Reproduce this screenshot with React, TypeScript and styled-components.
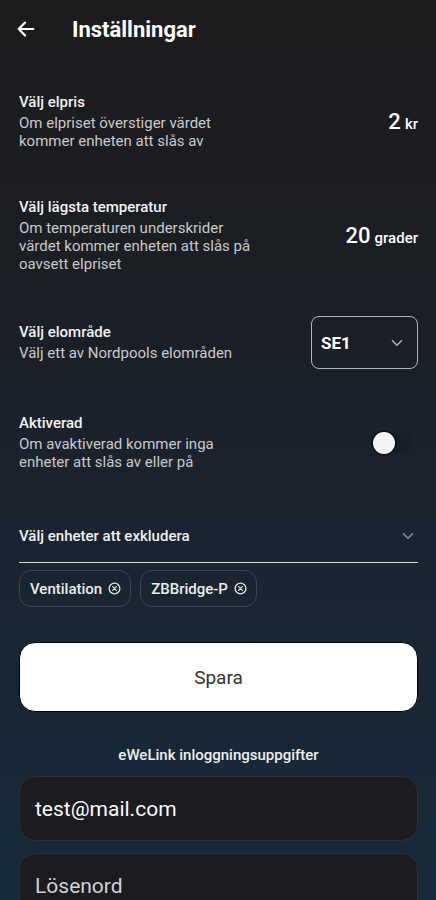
import React from "react";
import styled, { createGlobalStyle } from "styled-components";

const Global = createGlobalStyle`
  html, body { margin: 0; padding: 0; }
  body {
    font-family: Roboto, "Noto Sans", sans-serif;
    background: #171f29;
    overflow: hidden;
    -webkit-font-smoothing: antialiased;
  }
  * { box-sizing: border-box; }
`;

const Screen = styled.div`
  width: 436px;
  height: 900px;
  overflow: hidden;
  background: linear-gradient(180deg, #1b1b1d 0%, #1b1e23 30%, #1a2430 60%, #172a3a 100%);
  color: #fff;
  display: flex;
  flex-direction: column;
`;

const Header = styled.header`
  height: 58px;
  flex-shrink: 0;
  display: flex;
  align-items: center;
  padding-left: 15px;
  gap: 35px;
`;

const Title = styled.h1`
  margin: 0;
  font-size: 22px;
  font-weight: 700;
  color: #fff;
`;

const Content = styled.main`
  padding: 35px 18px 0 19px;
  display: flex;
  flex-direction: column;
  flex-shrink: 0;
`;

const SettingRow = styled.div<{ $gap: number }>`
  display: flex;
  align-items: center;
  justify-content: space-between;
  margin-bottom: ${(p) => p.$gap}px;
`;

const TextBlock = styled.div`
  display: flex;
  flex-direction: column;
  max-width: 240px;
`;

const Label = styled.div`
  font-size: 15px;
  line-height: 18px;
  font-weight: 500;
  color: #f2f2f2;
  margin-bottom: 3px;
`;

const Desc = styled.div`
  font-size: 15px;
  line-height: 18px;
  color: #c9c9cb;
`;

const Value = styled.div`
  display: flex;
  align-items: baseline;
  gap: 4px;
  color: #fff;
`;

const Num = styled.span`
  font-size: 22px;
  font-weight: 500;
`;

const Unit = styled.span`
  font-size: 15px;
  font-weight: 500;
`;

const Select = styled.div`
  width: 107px;
  height: 53px;
  border: 1.5px solid #b4b4b6;
  border-radius: 8px;
  display: flex;
  align-items: center;
  justify-content: space-between;
  padding: 0 14px 0 9px;
  font-size: 17px;
  font-weight: 700;
  color: #fff;
`;

const Switch = styled.div`
  width: 40px;
  height: 22px;
  border-radius: 11px;
  background: rgba(10, 16, 24, 0.18);
  position: relative;
  margin-right: 6px;
`;

const Thumb = styled.div`
  position: absolute;
  left: 1px;
  top: 0;
  width: 22px;
  height: 22px;
  border-radius: 50%;
  background: #f4f4f4;
  box-shadow: 0 0 2px 1px rgba(0, 0, 0, 0.6);
`;

const MultiField = styled.div`
  display: flex;
  align-items: center;
  justify-content: space-between;
  padding: 0 4px 17px 0;
  border-bottom: 1.5px solid #d8d8da;
  font-size: 15px;
  line-height: 18px;
  font-weight: 500;
  color: #f0f0f0;
`;

const Chips = styled.div`
  display: flex;
  gap: 9px;
  margin-top: 7px;
`;

const Chip = styled.div`
  height: 37px;
  display: flex;
  align-items: center;
  gap: 6px;
  padding: 0 9px 0 10px;
  border: 1px solid #3f464f;
  border-radius: 12px;
  font-size: 15px;
  font-weight: 500;
  color: #ececec;
`;

const SaveButton = styled.button`
  margin-top: 35px;
  height: 70px;
  width: 100%;
  background: #fff;
  border: 1px solid #000;
  border-radius: 16px;
  font-family: Roboto, sans-serif;
  font-size: 19px;
  color: #333;
`;

const SectionCaption = styled.div`
  margin-top: 34px;
  text-align: center;
  font-size: 15px;
  line-height: 18px;
  font-weight: 500;
  color: #f0f0f0;
`;

const Input = styled.div<{ $placeholder?: boolean }>`
  margin-top: 12px;
  height: 65px;
  flex-shrink: 0;
  border-radius: 16px;
  background: #1c1b20;
  border: 1.5px solid #2a2f38;
  display: flex;
  align-items: center;
  padding-left: 15px;
  font-size: 21px;
  color: ${(p) => (p.$placeholder ? "#d2d2d4" : "#fafafa")};
`;

const BackArrow = () => (
  <svg width="22" height="22" viewBox="0 0 24 24" fill="none" stroke="#fff" strokeWidth="2.4" strokeLinecap="round" strokeLinejoin="round">
    <path d="M20 12H4.5" />
    <path d="M11 5l-7 7 7 7" />
  </svg>
);

const Chevron = ({ color = "#aeb0b4" }: { color?: string }) => (
  <svg width="12" height="8" viewBox="0 0 12 8" fill="none" stroke={color} strokeWidth="1.6" strokeLinecap="round" strokeLinejoin="round">
    <path d="M1.5 1.8L6 6.2l4.5-4.4" />
  </svg>
);

const CancelIcon = () => (
  <svg width="13" height="13" viewBox="0 0 14 14" fill="none" stroke="#e6e6e6" strokeWidth="1.4" strokeLinecap="round">
    <circle cx="7" cy="7" r="5.8" />
    <path d="M5 5l4 4M9 5l-4 4" />
  </svg>
);

export default function App() {
  return (
    <>
      <Global />
      <Screen>
        <Header>
          <BackArrow />
          <Title>Inställningar</Title>
        </Header>
        <Content>
          <SettingRow $gap={48}>
            <TextBlock>
              <Label>Välj elpris</Label>
              <Desc>Om elpriset överstiger värdet kommer enheten att slås av</Desc>
            </TextBlock>
            <Value>
              <Num>2</Num>
              <Unit>kr</Unit>
            </Value>
          </SettingRow>
          <SettingRow $gap={43}>
            <TextBlock>
              <Label>Välj lägsta temperatur</Label>
              <Desc>Om temperaturen underskrider värdet kommer enheten att slås på oavsett elpriset</Desc>
            </TextBlock>
            <Value>
              <Num>20</Num>
              <Unit>grader</Unit>
            </Value>
          </SettingRow>
          <SettingRow $gap={45}>
            <TextBlock>
              <Label>Välj elområde</Label>
              <Desc>Välj ett av Nordpools elområden</Desc>
            </TextBlock>
            <Select>
              SE1
              <Chevron />
            </Select>
          </SettingRow>
          <SettingRow $gap={56}>
            <TextBlock>
              <Label>Aktiverad</Label>
              <Desc>Om avaktiverad kommer inga enheter att slås av eller på</Desc>
            </TextBlock>
            <Switch>
              <Thumb />
            </Switch>
          </SettingRow>
          <MultiField>
            Välj enheter att exkludera
            <Chevron color="#8a8d92" />
          </MultiField>
          <Chips>
            <Chip>
              Ventilation
              <CancelIcon />
            </Chip>
            <Chip>
              ZBBridge-P
              <CancelIcon />
            </Chip>
          </Chips>
          <SaveButton>Spara</SaveButton>
          <SectionCaption>eWeLink inloggningsuppgifter</SectionCaption>
          <Input>test@mail.com</Input>
          <Input $placeholder>Lösenord</Input>
        </Content>
      </Screen>
    </>
  );
}
